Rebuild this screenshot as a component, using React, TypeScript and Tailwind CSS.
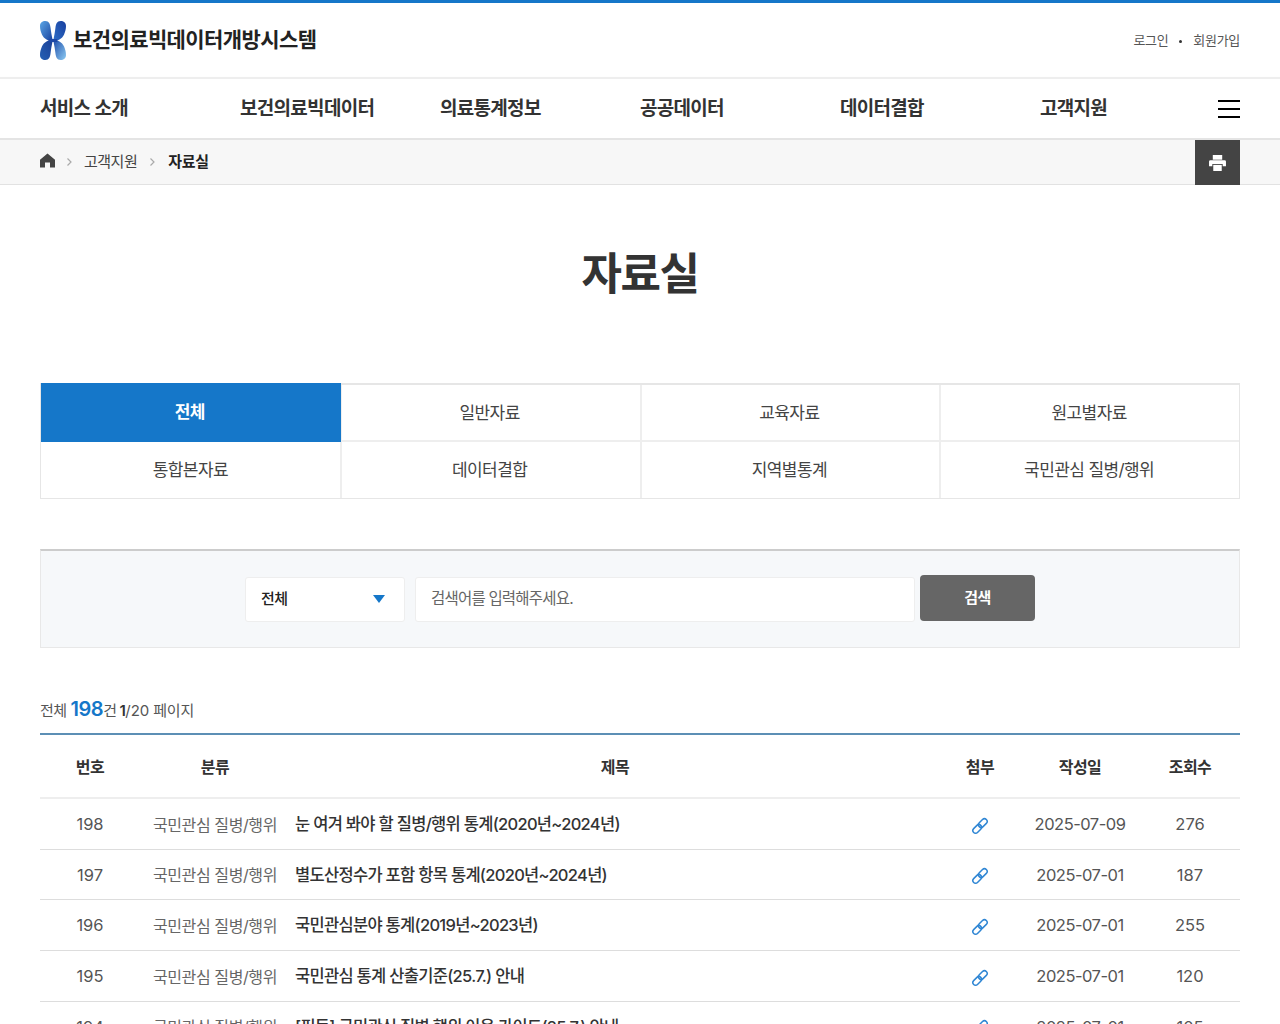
const navItems = ["서비스 소개", "보건의료빅데이터", "의료통계정보", "공공데이터", "데이터결합", "고객지원"];

const tabs = ["전체", "일반자료", "교육자료", "원고별자료", "통합본자료", "데이터결합", "지역별통계", "국민관심 질병/행위"];

const rows = [
  { no: 198, title: "눈 여겨 봐야 할 질병/행위 통계(2020년~2024년)", date: "2025-07-09", views: 276 },
  { no: 197, title: "별도산정수가 포함 항목 통계(2020년~2024년)", date: "2025-07-01", views: 187 },
  { no: 196, title: "국민관심분야 통계(2019년~2023년)", date: "2025-07-01", views: 255 },
  { no: 195, title: "국민관심 통계 산출기준(25.7.) 안내", date: "2025-07-01", views: 120 },
  { no: 194, title: "[필독] 국민관심 질병 행위 이용 가이드(25.7.) 안내", date: "2025-07-01", views: 105 },
];

const lobe = "M0 5C0 1.500 2.500 0 5.500 0 9.500 0 10.500 3 11 7 11.500 11 12 14 13 18.500L13 20.500C9 20 4 18 2 13.500.700 10.500 0 8 0 5Z";

function Logo() {
  return (
    <svg width="26" height="39" viewBox="0 0 27 39" preserveAspectRatio="none" aria-hidden="true">
      <defs>
        <linearGradient id="logoA" x1="0" y1="0" x2="1" y2="1">
          <stop offset="0" stopColor="#5aa6e6" />
          <stop offset="1" stopColor="#173f9c" />
        </linearGradient>
        <linearGradient id="logoB" x1="0" y1="0" x2="1" y2="1">
          <stop offset="0" stopColor="#183f9e" />
          <stop offset="1" stopColor="#2f6fc8" />
        </linearGradient>
        <linearGradient id="logoC" x1="0" y1="0" x2="1" y2="1">
          <stop offset="0" stopColor="#2560b4" />
          <stop offset="1" stopColor="#1a3f96" />
        </linearGradient>
        <linearGradient id="logoD" x1="0" y1="0" x2="1" y2="1">
          <stop offset="0" stopColor="#8ccaf2" />
          <stop offset="1" stopColor="#1c4ba9" />
        </linearGradient>
      </defs>
      <path d={lobe} fill="url(#logoA)" />
      <path d={lobe} fill="url(#logoB)" transform="translate(27 0) scale(-1 1)" />
      <path d={lobe} fill="url(#logoC)" transform="translate(0 39) scale(1 -1)" />
      <path d={lobe} fill="url(#logoD)" transform="translate(27 39) scale(-1 -1)" />
      <path d="M9 18h9v3H9Z" fill="#1d48a6" />
    </svg>
  );
}

function LinkIcon() {
  return (
    <svg width="18" height="18" viewBox="0 0 18 18" fill="none" stroke="#2f86d4" strokeWidth="1.500" aria-hidden="true">
      <rect x="1.200" y="9.200" width="10" height="5.400" rx="2.700" transform="rotate(-45 6.200 11.900)" />
      <rect x="6.800" y="3.400" width="10" height="5.400" rx="2.700" transform="rotate(-45 11.800 6.100)" />
    </svg>
  );
}

export default function App() {
  return (
    <div
      className="h-screen overflow-hidden bg-white text-[#333]"
      style={{ fontFamily: 'Inter, "Noto Sans CJK KR", sans-serif' }}
    >
      <div className="h-[3px] bg-[#1577c9]" />

      <header className="flex h-[74px] items-center justify-between px-10">
        <div className="flex items-center gap-[7px]">
          <Logo />
          <span className="text-[21px] font-bold tracking-[-0.600px] text-[#222]">보건의료빅데이터개방시스템</span>
        </div>
        <div className="flex translate-y-[1px] items-center text-[13px] tracking-[-0.300px] text-[#555]">
          <span>로그인</span>
          <span className="mx-[11px] h-[3px] w-[3px] rounded-full bg-[#333]" />
          <span>회원가입</span>
        </div>
      </header>

      <nav className="flex h-[63px] items-center border-y-2 border-t-[#eee] border-b-[#e4e4e4] px-10 shadow-[0_1px_2px_rgba(0,0,0,0.08)]">
        {navItems.map((item, i) => (
          <div
            key={item}
            className={
              i === 5
                ? "w-[178px] shrink-0 translate-y-[1px] text-[19px] font-semibold tracking-[-0.7px] text-[#333]"
                : "w-[200px] shrink-0 translate-y-[1px] text-[19px] font-semibold tracking-[-0.7px] text-[#333]"
            }
          >
            {item}
          </div>
        ))}
        <div className="flex h-[18px] w-[22px] shrink-0 flex-col justify-between">
          <span className="h-[2px] bg-black" />
          <span className="h-[2px] bg-black" />
          <span className="h-[2px] bg-black" />
        </div>
      </nav>

      <div className="flex h-[45px] items-center justify-between border-b border-[#e2e2e2] bg-[#f7f7f7] px-10">
        <div className="flex items-center text-[15px] tracking-[-0.300px]">
          <svg className="-translate-y-[2px]" width="15" height="15" viewBox="0 0 15 15" fill="#444" aria-hidden="true">
            <path d="M7.500.5 0 6.800V14.500h5V9.500h5v5h5V6.800Z" />
          </svg>
          <svg className="mx-[11px]" width="7" height="10" viewBox="0 0 7 10" fill="none" stroke="#aaa" strokeWidth="1.200" aria-hidden="true">
            <path d="M1.500 1.500 5 5 1.500 8.500" />
          </svg>
          <span className="tracking-[-0.500px] text-[#444]">고객지원</span>
          <svg className="mx-[12px]" width="7" height="10" viewBox="0 0 7 10" fill="none" stroke="#aaa" strokeWidth="1.200" aria-hidden="true">
            <path d="M1.500 1.500 5 5 1.500 8.500" />
          </svg>
          <span className="font-semibold text-[#222]">자료실</span>
        </div>
        <div className="flex h-[45px] w-[45px] items-center justify-center self-start bg-[#444]">
          <svg width="17" height="16" viewBox="0 0 18 17" fill="#fff" aria-hidden="true">
            <path d="M4 0h10v5H4Z" />
            <path d="M1.500 5.500h15A1.500 1.500 0 0 1 18 7v5h-3.500V9.500h-11V12H0V7a1.500 1.500 0 0 1 1.500-1.500Z" />
            <path d="M4.500 10.500h9V17h-9Z" />
          </svg>
        </div>
      </div>

      <h1 className="mt-[59px] text-center text-[44px] leading-[60px] font-bold tracking-[-1.500px] text-[#333]">자료실</h1>

      <div className="mx-10 mt-[79px] grid grid-cols-4 border-t-2 border-r border-b border-[#e6e6e6]">
        {tabs.map((tab, i) => (
          <div
            key={tab}
            className={
              i === 0
                ? "relative z-10 -mt-[2px] -mr-px flex h-[59px] items-center justify-center border-l border-l-[#e6e6e6] bg-[#1577c9] pt-[1px] pr-[2px] text-[17px] font-bold tracking-[-0.6px] text-white"
                : `flex items-center justify-center text-[17px] tracking-[-0.6px] text-[#444] ${i < 4 ? "h-[57px] border-b-2 border-[#eee] pt-[2px]" : "h-[56px] pt-[1px]"} ${i % 4 !== 0 ? "border-l-2 border-l-[#eee] pr-[2px]" : "border-l border-l-[#e6e6e6]"}`
            }
          >
            {tab}
          </div>
        ))}
      </div>

      <div className="mx-10 mt-[50px] flex h-[99px] items-center justify-center gap-[5px] border border-t-2 border-[#e8e8e8] border-t-[#ccc] bg-[#f6f8fa]">
        <div className="mr-[5px] flex h-[45px] w-[160px] items-center justify-between rounded-[3px] border border-[#eee] bg-white pr-[19px] pl-[15px] text-[15px] font-medium tracking-[-0.5px] text-[#222]">
          <span>전체</span>
          <span className="h-0 w-0 border-x-[6px] border-t-[8px] border-x-transparent border-t-[#1577c9]" />
        </div>
        <div className="flex h-[45px] w-[500px] items-center rounded-[3px] border border-[#eee] bg-white px-[15px] text-[15.500px] tracking-[-0.800px] text-[#666]">
          검색어를 입력해주세요.
        </div>
        <div className="flex h-[46px] w-[115px] -translate-y-[1px] items-center justify-center rounded-[4px] bg-[#666] text-[15px] font-bold tracking-[-0.5px] text-white">
          검색
        </div>
      </div>

      <div className="mx-10 mt-[51px] flex h-[32px] items-baseline text-[15px] tracking-[-0.5px] text-[#555]">
        <span>전체</span>
        <span className="ml-[4px] text-[20px] leading-none font-semibold tracking-[-0.500px] text-[#1577c9]">198</span>
        <span>건</span>
        <span className="ml-[3px] font-semibold text-[#333]">1</span>
        <span className="tracking-[-0.100px]">/20 페이지</span>
      </div>

      <table className="mx-10 mt-[2px] w-[1200px] table-fixed border-t-2 border-[#5c8fb5]">
        <colgroup>
          <col className="w-[100px]" />
          <col className="w-[150px]" />
          <col />
          <col className="w-[80px]" />
          <col className="w-[120px]" />
          <col className="w-[100px]" />
        </colgroup>
        <thead>
          <tr className="h-[64.400px] border-b-2 border-[#eee] text-[16px] tracking-[-0.5px] text-[#333]">
            <th className="pt-[1px] font-semibold">번호</th>
            <th className="pt-[1px] font-semibold">분류</th>
            <th className="pt-[1px] font-semibold">제목</th>
            <th className="pt-[1px] font-semibold">첨부</th>
            <th className="pt-[1px] font-semibold">작성일</th>
            <th className="pt-[1px] font-semibold">조회수</th>
          </tr>
        </thead>
        <tbody>
          {rows.map((row) => (
            <tr key={row.no} className="h-[50.750px] border-b border-[#ddd] text-center text-[16.500px] text-[#555]">
              <td className="pt-[1px]">{row.no}</td>
              <td className="pt-[1px] text-[16px] tracking-[-0.400px] whitespace-nowrap text-[#666]">국민관심 질병/행위</td>
              <td className="pt-[1px] pl-[5px] text-left text-[16.500px] font-medium tracking-[-0.700px] text-[#333]">{row.title}</td>
              <td>
                <span className="inline-flex translate-y-[5px]">
                  <LinkIcon />
                </span>
              </td>
              <td className="pt-[1px] tracking-[-0.500px]">{row.date}</td>
              <td className="pt-[1px]">{row.views}</td>
            </tr>
          ))}
        </tbody>
      </table>
    </div>
  );
}
